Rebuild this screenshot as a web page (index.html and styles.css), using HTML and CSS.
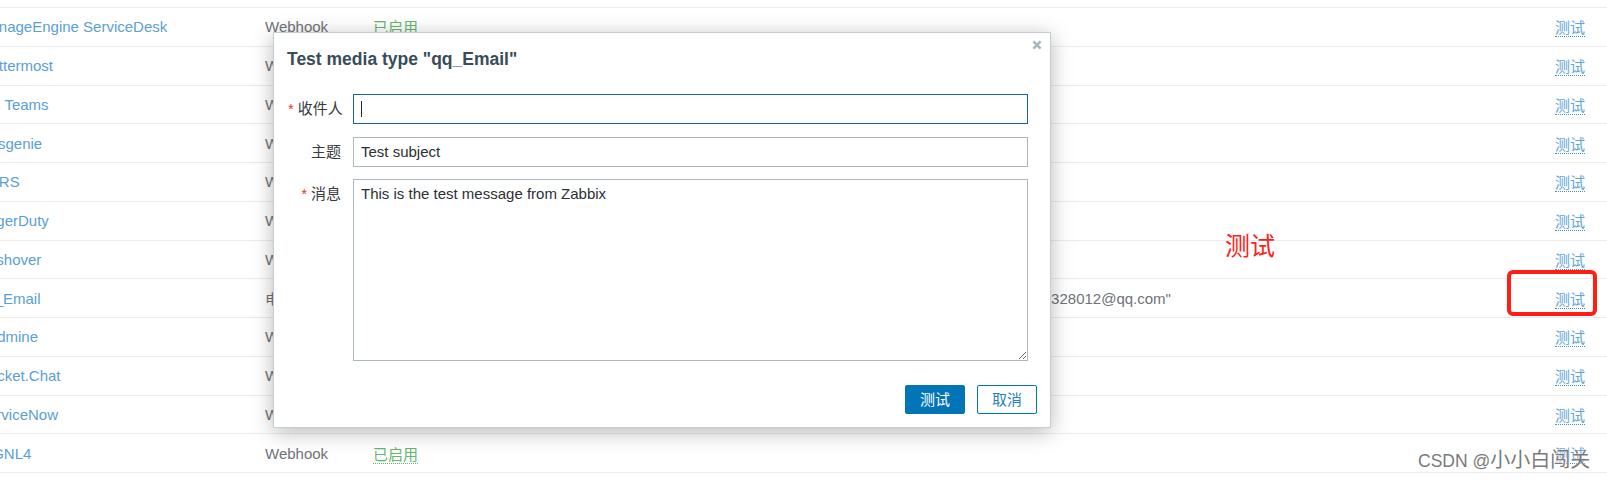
FILE: index.html
```html
<!DOCTYPE html>
<html lang="zh-CN">
<head>
<meta charset="utf-8">
<title>Media types</title>
<link rel="stylesheet" href="styles.css">
</head>
<body>
<div class="page">
  <div class="list">
    <div class="row"><span class="c-name"><a class="name-link">ManageEngine ServiceDesk</a></span><span class="c-type">Webhook</span><span class="c-status"><a class="status-on">已启用</a></span><span class="c-desc"></span><span class="c-act"><a class="act-link">测试</a></span></div>
    <div class="row"><span class="c-name"><a class="name-link">Mattermost</a></span><span class="c-type">Webhook</span><span class="c-status"><a class="status-on">已启用</a></span><span class="c-desc"></span><span class="c-act"><a class="act-link">测试</a></span></div>
    <div class="row"><span class="c-name"><a class="name-link">MS Teams</a></span><span class="c-type">Webhook</span><span class="c-status"><a class="status-on">已启用</a></span><span class="c-desc"></span><span class="c-act"><a class="act-link">测试</a></span></div>
    <div class="row"><span class="c-name"><a class="name-link">Opsgenie</a></span><span class="c-type">Webhook</span><span class="c-status"><a class="status-on">已启用</a></span><span class="c-desc"></span><span class="c-act"><a class="act-link">测试</a></span></div>
    <div class="row"><span class="c-name"><a class="name-link">OTRS</a></span><span class="c-type">Webhook</span><span class="c-status"><a class="status-on">已启用</a></span><span class="c-desc"></span><span class="c-act"><a class="act-link">测试</a></span></div>
    <div class="row"><span class="c-name"><a class="name-link">PagerDuty</a></span><span class="c-type">Webhook</span><span class="c-status"><a class="status-on">已启用</a></span><span class="c-desc"></span><span class="c-act"><a class="act-link">测试</a></span></div>
    <div class="row"><span class="c-name"><a class="name-link">Pushover</a></span><span class="c-type">Webhook</span><span class="c-status"><a class="status-on">已启用</a></span><span class="c-desc"></span><span class="c-act"><a class="act-link">测试</a></span></div>
    <div class="row"><span class="c-name"><a class="name-link">qq_Email</a></span><span class="c-type">电子邮件</span><span class="c-status"><a class="status-on">已启用</a></span><span class="c-desc">SMTP server: "smtp.qq.com", SMTP helo: "qq.com", SMTP email: "1179328012@qq.com"</span><span class="c-act"><a class="act-link">测试</a></span></div>
    <div class="row"><span class="c-name"><a class="name-link">Redmine</a></span><span class="c-type">Webhook</span><span class="c-status"><a class="status-on">已启用</a></span><span class="c-desc"></span><span class="c-act"><a class="act-link">测试</a></span></div>
    <div class="row"><span class="c-name"><a class="name-link">Rocket.Chat</a></span><span class="c-type">Webhook</span><span class="c-status"><a class="status-on">已启用</a></span><span class="c-desc"></span><span class="c-act"><a class="act-link">测试</a></span></div>
    <div class="row"><span class="c-name"><a class="name-link">ServiceNow</a></span><span class="c-type">Webhook</span><span class="c-status"><a class="status-on">已启用</a></span><span class="c-desc"></span><span class="c-act"><a class="act-link">测试</a></span></div>
    <div class="row"><span class="c-name"><a class="name-link">SIGNL4</a></span><span class="c-type">Webhook</span><span class="c-status"><a class="status-on">已启用</a></span><span class="c-desc"></span><span class="c-act"><a class="act-link">测试</a></span></div>
  </div>

  <div class="dialog">
    <button class="dialog-close" type="button" aria-label="关闭">
      <svg width="10" height="10" viewBox="0 0 10 10"><path d="M1.4 1.4 L8.6 8.6 M8.6 1.4 L1.4 8.6" stroke="#aab6bd" stroke-width="2.6" fill="none"/></svg>
    </button>
    <h4 class="dialog-title">Test media type "qq_Email"</h4>
    <form class="dialog-form">
      <label class="form-label required">收件人</label>
      <div class="field has-caret"><input class="text-input is-focused" type="text" value=""></div>
      <label class="form-label">主题</label>
      <div class="field"><input class="text-input" type="text" value="Test subject"></div>
      <label class="form-label required">消息</label>
      <div class="field"><textarea class="text-area">This is the test message from Zabbix</textarea></div>
    </form>
    <div class="dialog-footer">
      <button class="btn btn-primary" type="button">测试</button>
      <button class="btn btn-alt" type="button">取消</button>
    </div>
  </div>

  <div class="annot-text">测试</div>
  <div class="annot-box"></div>
  <div class="watermark"><span class="wm-latin">CSDN @</span>小小白闯关</div>
</div>
</body>
</html>
```

FILE: styles.css
```css
html, body {
  margin: 0;
  padding: 0;
  background: #ffffff;
}

body {
  font-family: "Liberation Sans", "Noto Sans CJK SC", sans-serif;
  font-size: 15px;
  color: #1f2c33;
  overflow: hidden;
}

.page {
  position: relative;
  width: 1607px;
  height: 481px;
  overflow: hidden;
}

/* ---------- list ---------- */
.list {
  margin-left: -22px;
  width: calc(100% + 22px);
  padding-top: 7px;
}

.row {
  display: grid;
  grid-template-columns: 287px 108px 198px 1fr auto;
  align-items: center;
  height: 38.75px;
  box-sizing: border-box;
  border-top: 1px solid #ebebeb;
  white-space: nowrap;
}

.row:last-child {
  height: 39.75px;
  border-bottom: 1px solid #ebebeb;
}

.name-link {
  color: #5aa0d5;
  text-decoration: none;
}

.c-type {
  color: #6e7378;
}

.status-on {
  color: #66b66d;
  text-decoration: none;
  border-bottom: 1px dotted #62b46a;
}

.c-desc {
  color: #6e7378;
  font-kerning: none;
  overflow: hidden;
}

.c-act {
  padding-right: 22px;
  text-align: right;
}

.act-link {
  color: #62a5d8;
  text-decoration: none;
  border-bottom: 1px dotted #3f93d3;
}

/* ---------- dialog ---------- */
.dialog {
  position: absolute;
  left: 273px;
  top: 32px;
  width: 778px;
  box-sizing: border-box;
  background: #ffffff;
  border: 1px solid #c3ccd1;
  box-shadow: 0 4px 20px rgba(0, 0, 0, 0.28);
}

.dialog-close {
  position: absolute;
  top: 7px;
  right: 8px;
  width: 10px;
  height: 10px;
  padding: 0;
  border: 0;
  background: transparent;
  display: flex;
}

.dialog-title {
  margin: 0;
  padding: 16px 14px 0 13px;
  font-size: 17.5px;
  line-height: 20px;
  font-weight: bold;
  color: #384c59;
}

.dialog-form {
  display: grid;
  grid-template-columns: 53px 1fr;
  column-gap: 12px;
  row-gap: 12.5px;
  padding: 25px 22px 0 14px;
  margin: 0;
}

.form-label {
  text-align: right;
  line-height: 30px;
  color: #383c40;
  white-space: nowrap;
}

.form-label.required::before {
  content: "*";
  color: #e33734;
  margin-right: 4px;
}

.field {
  position: relative;
  display: flex;
}

.text-input {
  width: 100%;
  height: 30px;
  box-sizing: border-box;
  margin: 0;
  padding: 0 7px;
  border: 1px solid #acb8bf;
  border-radius: 0;
  outline: none;
  font-family: "Liberation Sans", "Noto Sans CJK SC", sans-serif;
  font-size: 15px;
  color: #2b3034;
  background: #ffffff;
}

.text-input.is-focused {
  border-color: #1b6499;
}

.has-caret::after {
  content: "";
  position: absolute;
  left: 8px;
  top: 7px;
  width: 1px;
  height: 16px;
  background: #1f2c33;
}

.text-area {
  width: 100%;
  height: 182px;
  box-sizing: border-box;
  margin: 0;
  padding: 5px 7px;
  border: 1px solid #acb8bf;
  border-radius: 0;
  outline: none;
  font-family: "Liberation Sans", "Noto Sans CJK SC", sans-serif;
  font-size: 15px;
  line-height: 18px;
  color: #2b3034;
  background: #ffffff;
  resize: both;
}

.dialog-footer {
  display: flex;
  justify-content: flex-end;
  gap: 12px;
  padding: 24px 13px 13px 0;
}

.btn {
  width: 60px;
  height: 29px;
  box-sizing: border-box;
  margin: 0;
  padding: 0;
  border-radius: 2px;
  font-family: "Liberation Sans", "Noto Sans CJK SC", sans-serif;
  font-size: 15px;
  line-height: 27px;
}

.btn-primary {
  background: #0275b8;
  border: 1px solid #0275b8;
  color: #ffffff;
}

.btn-alt {
  background: #ffffff;
  border: 1px solid #0275b8;
  color: #2a7fbf;
}

/* ---------- annotations ---------- */
.annot-text {
  position: absolute;
  left: 1225px;
  top: 231px;
  font-size: 25px;
  line-height: 30px;
  color: #ff2219;
}

.annot-box {
  position: absolute;
  left: 1507px;
  top: 270px;
  width: 90px;
  height: 46px;
  box-sizing: border-box;
  border: 4px solid #ff1d14;
  border-radius: 6px;
}

.watermark {
  position: absolute;
  left: 1418px;
  top: 448px;
  font-size: 20px;
  line-height: 24px;
  color: #7a7a7a;
  text-shadow: 0 0 2px #ffffff, 0 0 1px #ffffff;
  white-space: nowrap;
}

.wm-latin {
  font-size: 17.5px;
}
```
